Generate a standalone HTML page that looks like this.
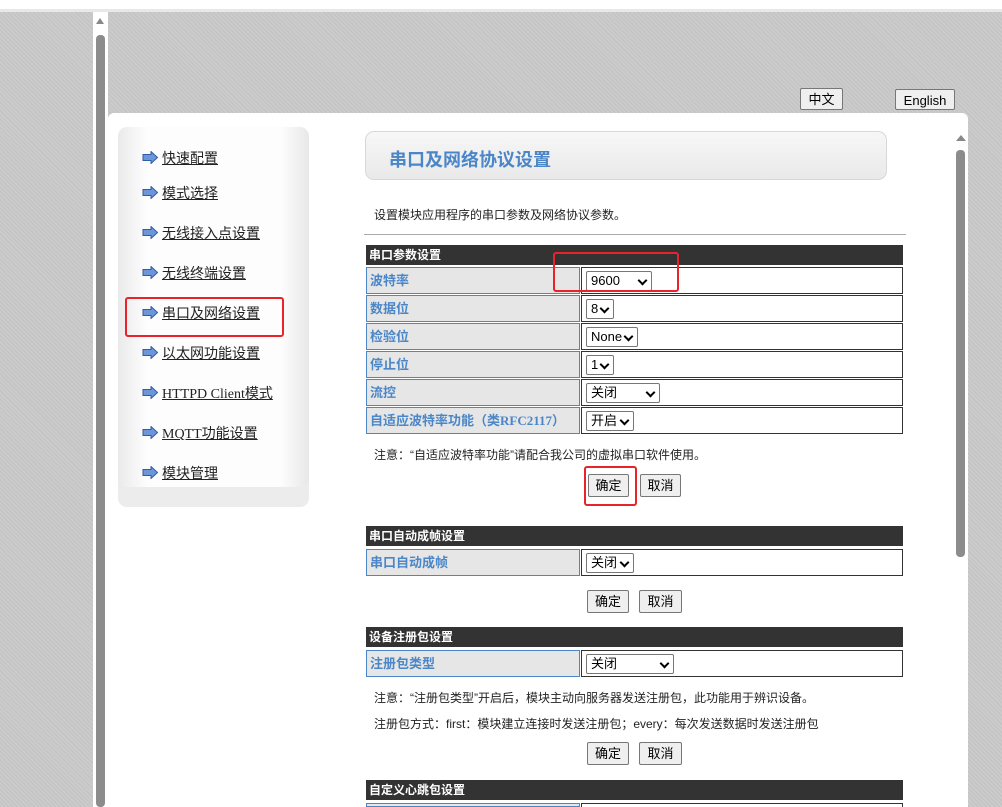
<!DOCTYPE html>
<html><head><meta charset="utf-8"><style>
*{margin:0;padding:0;box-sizing:border-box}
html,body{width:1002px;height:807px;overflow:hidden}
body{position:relative;background:#c4c4c4;font-family:"Liberation Serif","Noto Serif CJK SC","Noto Sans CJK SC",serif;font-size:13px;color:#222}
.a{position:absolute}
.tex{background:repeating-linear-gradient(45deg,#c2c2c2 0 1px,#cbcbcb 1px 3px)}
.nav a{position:absolute;left:162px;color:#222;text-decoration:underline;font-size:14px;font-family:"Liberation Serif","Noto Sans CJK SC",sans-serif}
.arr{position:absolute;left:-20px;top:3px;width:17px;height:13px}
.th{position:absolute;left:366px;width:537px;height:20px;background:#333;color:#fff;font-weight:bold;font-size:12px;line-height:21px;padding-left:3px;font-family:"Liberation Sans","Noto Sans CJK SC",sans-serif}
.lb{position:absolute;left:366px;width:214px;height:27px;background:#e6e6e6;border:1px solid #4a86c8;color:#4a86c8;font-weight:bold;font-size:13px;line-height:25px;padding-left:3px;font-family:"Liberation Serif","Noto Sans CJK SC",sans-serif}
.vl{position:absolute;left:581px;width:322px;height:27px;border:1px solid #333;background:#fff}
.sel{position:absolute;left:4px;top:3px;height:20px;border:1px solid #777;border-radius:2px;background:#fff;font-size:13px;line-height:18px;padding-left:4px;font-family:"Liberation Sans","Noto Sans CJK SC",sans-serif;color:#000}
.sel:after{content:"";position:absolute;right:5px;top:5px;width:5px;height:5px;border-right:2px solid #000;border-bottom:2px solid #000;transform:rotate(45deg)}
.btn{position:absolute;height:23px;border:1px solid #777;border-radius:2px;background:#efefef;font-size:13px;line-height:21px;text-align:center;font-family:"Liberation Sans","Noto Sans CJK SC",sans-serif;color:#000}
.note{position:absolute;left:374px;font-size:12px;font-family:"Liberation Sans","Noto Sans CJK SC",sans-serif;color:#222}
.red{position:absolute;border:2px solid #e8242a;border-radius:3px}
</style></head><body>
<div class="a" style="left:0;top:0;width:1002px;height:9px;background:#fff"></div>
<div class="a" style="left:0;top:9px;width:1002px;height:3px;background:#e8e8e8"></div>
<div class="a tex" style="left:0;top:12px;width:93px;height:795px"></div>
<div class="a" style="left:93px;top:12px;width:15px;height:795px;background:#fff"></div>
<div class="a" style="left:96px;top:18px;width:0;height:0;border-left:4px solid transparent;border-right:4px solid transparent;border-bottom:6px solid #888"></div>
<div class="a" style="left:96px;top:35px;width:9px;height:772px;background:#8c8c8c;border-radius:4px"></div>
<div class="a tex" style="left:108px;top:12px;width:894px;height:795px"></div>
<div class="btn" style="left:800px;top:88px;width:43px;height:22px">中文</div>
<div class="btn" style="left:895px;top:89px;width:60px;height:21px">English</div>
<div class="a" style="left:108px;top:113px;width:860px;height:694px;background:#fff;border-radius:6px 6px 0 0"></div>
<div class="a" style="left:956px;top:135px;width:0;height:0;border-left:5px solid transparent;border-right:5px solid transparent;border-bottom:6px solid #888"></div>
<div class="a" style="left:956px;top:150px;width:9px;height:407px;background:#8c8c8c;border-radius:4px"></div>
<div class="a" style="left:118px;top:127px;width:191px;height:380px;border-radius:9px;background:linear-gradient(90deg,#eaeaea,#fdfdfd 15%,#fdfdfd 85%,#e8e8e8);box-shadow:inset 0 -20px 0 #ececec"></div>
<div class="nav">
<a style="top:148px"><svg class="arr" viewBox="0 0 17 13"><path d="M1 3.5h8V.5l6.5 6-6.5 6v-3H1z" fill="#6b96d8" stroke="#2f5ba8"/></svg>快速配置</a>
<a style="top:183px"><svg class="arr" viewBox="0 0 17 13"><path d="M1 3.5h8V.5l6.5 6-6.5 6v-3H1z" fill="#6b96d8" stroke="#2f5ba8"/></svg>模式选择</a>
<a style="top:223px"><svg class="arr" viewBox="0 0 17 13"><path d="M1 3.5h8V.5l6.5 6-6.5 6v-3H1z" fill="#6b96d8" stroke="#2f5ba8"/></svg>无线接入点设置</a>
<a style="top:263px"><svg class="arr" viewBox="0 0 17 13"><path d="M1 3.5h8V.5l6.5 6-6.5 6v-3H1z" fill="#6b96d8" stroke="#2f5ba8"/></svg>无线终端设置</a>
<a style="top:303px"><svg class="arr" viewBox="0 0 17 13"><path d="M1 3.5h8V.5l6.5 6-6.5 6v-3H1z" fill="#6b96d8" stroke="#2f5ba8"/></svg>串口及网络设置</a>
<a style="top:343px"><svg class="arr" viewBox="0 0 17 13"><path d="M1 3.5h8V.5l6.5 6-6.5 6v-3H1z" fill="#6b96d8" stroke="#2f5ba8"/></svg>以太网功能设置</a>
<a style="top:383px"><svg class="arr" viewBox="0 0 17 13"><path d="M1 3.5h8V.5l6.5 6-6.5 6v-3H1z" fill="#6b96d8" stroke="#2f5ba8"/></svg>HTTPD Client模式</a>
<a style="top:423px"><svg class="arr" viewBox="0 0 17 13"><path d="M1 3.5h8V.5l6.5 6-6.5 6v-3H1z" fill="#6b96d8" stroke="#2f5ba8"/></svg>MQTT功能设置</a>
<a style="top:463px"><svg class="arr" viewBox="0 0 17 13"><path d="M1 3.5h8V.5l6.5 6-6.5 6v-3H1z" fill="#6b96d8" stroke="#2f5ba8"/></svg>模块管理</a>
</div>
<div class="red" style="left:125px;top:297px;width:159px;height:40px"></div>
<div class="a" style="left:365px;top:131px;width:522px;height:49px;border:1px solid #d8d8d8;border-radius:9px;background:linear-gradient(#f7f7f7,#e9e9e9)"></div>
<div class="a" style="left:389px;top:146px;font-size:18px;font-weight:bold;color:#4a86c8;font-family:'Liberation Sans','Noto Sans CJK SC',sans-serif">串口及网络协议设置</div>
<div class="note" style="top:206px">设置模块应用程序的串口参数及网络协议参数。</div>
<div class="a" style="left:364px;top:234px;width:542px;height:1px;background:#aaa"></div>

<div class="th" style="top:245px">串口参数设置</div>
<div class="lb" style="top:267px">波特率</div><div class="vl" style="top:267px"><div class="sel" style="width:66px">9600</div></div>
<div class="lb" style="top:295px">数据位</div><div class="vl" style="top:295px"><div class="sel" style="width:28px">8</div></div>
<div class="lb" style="top:323px">检验位</div><div class="vl" style="top:323px"><div class="sel" style="width:52px">None</div></div>
<div class="lb" style="top:351px">停止位</div><div class="vl" style="top:351px"><div class="sel" style="width:28px">1</div></div>
<div class="lb" style="top:379px">流控</div><div class="vl" style="top:379px"><div class="sel" style="width:74px">关闭</div></div>
<div class="lb" style="top:407px">自适应波特率功能（类RFC2117）</div><div class="vl" style="top:407px"><div class="sel" style="width:48px">开启</div></div>
<div class="note" style="top:446px">注意：“自适应波特率功能”请配合我公司的虚拟串口软件使用。</div>
<div class="btn" style="left:588px;top:474px;width:41px">确定</div>
<div class="btn" style="left:640px;top:474px;width:41px">取消</div>
<div class="red" style="left:553px;top:252px;width:126px;height:40px"></div>
<div class="red" style="left:584px;top:466px;width:53px;height:40px"></div>

<div class="th" style="top:526px">串口自动成帧设置</div>
<div class="lb" style="top:549px">串口自动成帧</div><div class="vl" style="top:549px"><div class="sel" style="width:48px">关闭</div></div>
<div class="btn" style="left:587px;top:590px;width:42px">确定</div>
<div class="btn" style="left:639px;top:590px;width:43px">取消</div>

<div class="th" style="top:627px">设备注册包设置</div>
<div class="lb" style="top:650px">注册包类型</div><div class="vl" style="top:650px"><div class="sel" style="width:88px">关闭</div></div>
<div class="note" style="top:689px">注意：“注册包类型”开启后，模块主动向服务器发送注册包，此功能用于辨识设备。</div>
<div class="note" style="top:715px">注册包方式：first：模块建立连接时发送注册包；every：每次发送数据时发送注册包</div>
<div class="btn" style="left:587px;top:742px;width:42px">确定</div>
<div class="btn" style="left:639px;top:742px;width:43px">取消</div>

<div class="th" style="top:780px">自定义心跳包设置</div>
<div class="lb" style="top:803px;height:4px"></div><div class="vl" style="top:803px;height:4px;border-bottom:none"></div>
</body></html>
